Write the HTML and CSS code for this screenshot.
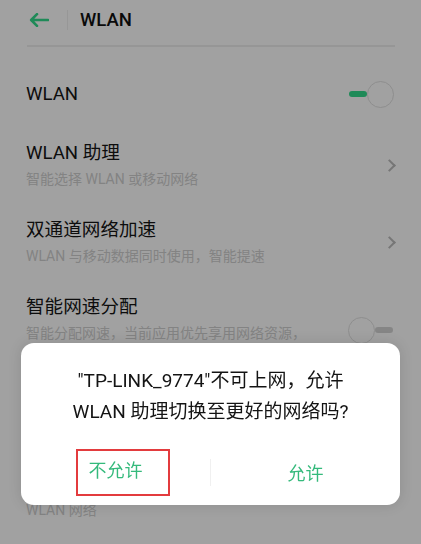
FILE: index.html
```html
<!DOCTYPE html>
<html lang="zh-CN">
<head>
  <meta charset="UTF-8">
  <meta name="viewport" content="width=device-width, initial-scale=1.0">
  <title>WLAN</title>
  <link rel="stylesheet" href="styles.css">
</head>
<body>
  <div class="page">
    <header class="topbar">
      <svg class="back" width="20" height="14" viewBox="0 0 20 14">
        <path d="M19 7H2.5M8 1.2L2.2 7L8 12.8" fill="none" stroke="#1f8a58" stroke-width="2.6" stroke-linecap="round" stroke-linejoin="round"/>
      </svg>
      <span class="topbar-sep"></span>
      <h1>WLAN</h1>
    </header>

    <ul class="list">
      <li class="item item-single">
        <div class="item-text">
          <div class="item-title">WLAN</div>
        </div>
        <span class="switch on"><span class="switch-track"></span><span class="switch-knob"></span></span>
      </li>
      <li class="item">
        <div class="item-text">
          <div class="item-title">WLAN 助理</div>
          <div class="item-sub">智能选择 WLAN 或移动网络</div>
        </div>
        <span class="chevron"></span>
      </li>
      <li class="item">
        <div class="item-text">
          <div class="item-title">双通道网络加速</div>
          <div class="item-sub">WLAN 与移动数据同时使用，智能提速</div>
        </div>
        <span class="chevron"></span>
      </li>
      <li class="item item-top">
        <div class="item-text">
          <div class="item-title">智能网速分配</div>
          <div class="item-sub">智能分配网速，当前应用优先享用网络资源，保障流畅体验</div>
        </div>
        <span class="switch off"><span class="switch-knob"></span><span class="switch-track"></span></span>
      </li>
    </ul>
    <div class="section-label">WLAN 网络</div>
  </div>

  <div class="dialog">
    <p class="dialog-msg">"TP-LINK_9774"不可上网，允许<br>WLAN 助理切换至更好的网络吗?</p>
    <div class="dialog-actions">
      <button class="dialog-btn"><span class="mark">不允许</span></button>
      <span class="dialog-sep"></span>
      <button class="dialog-btn">允许</button>
    </div>
  </div>
</body>
</html>
```

FILE: styles.css
```css
* {
  box-sizing: border-box;
}
html, body {
  margin: 0;
  padding: 0;
}
body {
  width: 421px;
  height: 544px;
  overflow: hidden;
  background-color: #a1a1a1;
  font-family: Roboto, "Noto Sans CJK SC", sans-serif;
  color: #0d0d0d;
}
.page {
  padding: 0 26px 0 26px;
}

/* top bar */
.topbar {
  height: 47px;
  display: flex;
  align-items: center;
  border-bottom: 2px solid #969696;
  margin-left: 1px;
}
.back {
  margin-left: 2px;
  margin-top: -6px;
}
.topbar-sep {
  width: 1px;
  height: 20px;
  background-color: #979797;
  margin: -6px 0 0 18px;
}
.topbar h1 {
  margin: -6px 0 0 12px;
  font-size: 18.5px;
  font-weight: 500;
  color: #0a0a0a;
}

/* settings list */
.list {
  list-style: none;
  margin: 0;
  padding: 15px 0 0 0;
}
.item {
  display: flex;
  align-items: center;
  padding: 14px 0 15px 0;
}
.item-single {
  padding: 18px 0 19px 0;
}
.item-top {
  align-items: flex-start;
  padding-bottom: 15px;
}
.item-text {
  flex: 1;
  min-width: 0;
}
.item-title {
  font-size: 18.6px;
  line-height: 24px;
}
.item-sub {
  font-size: 14px;
  line-height: 20px;
  margin-top: 4px;
  color: #838383;
  padding-right: 30px;
}

.chevron {
  width: 9px;
  height: 9px;
  border-top: 2px solid #767676;
  border-right: 2px solid #767676;
  transform: rotate(45deg);
  margin-right: 1px;
}

/* switches */
.switch {
  display: flex;
  align-items: center;
  width: 46px;
  height: 28px;
}
.switch-knob {
  width: 27px;
  height: 27px;
  border-radius: 50%;
  border: 1.5px solid #8e8e8e;
}
.switch-track {
  width: 18px;
  height: 6px;
  border-radius: 3px;
}
.switch.on .switch-track {
  background-color: #1f8a58;
}
.switch.off {
  margin-top: 21px;
  margin-right: 1px;
}
.switch.off .switch-track {
  background-color: #858585;
}

/* group caption, most of the gap above it sits under the dialog */
.section-label {
  margin-top: 122px;
  font-size: 14px;
  line-height: 20px;
  color: #838383;
}

/* dialog over the list */
.dialog {
  position: fixed;
  left: 21px;
  top: 343px;
  width: 379px;
  height: 162px;
  background-color: #fff;
  border-radius: 13px;
  box-shadow: 0 0 14px rgba(0, 0, 0, 0.12);
  padding-top: 22px;
}
.dialog-msg {
  margin: 0;
  text-align: center;
  font-size: 19px;
  line-height: 31px;
  color: #141414;
}
.dialog-actions {
  display: flex;
  align-items: center;
  margin-top: 21px;
  height: 48px;
}
.dialog-btn {
  flex: 1;
  border: none;
  background: none;
  padding: 0;
  font-family: inherit;
  font-size: 18px;
  color: #35ba7c;
  cursor: pointer;
}
.dialog-sep {
  width: 1px;
  height: 27px;
  background-color: #f0f0f0;
}
.mark {
  display: inline-block;
  line-height: 20px;
  padding: 10px 25px 13px 11px;
  margin-left: 14px;
  border: 2.5px solid #e33b3e;
}
```
